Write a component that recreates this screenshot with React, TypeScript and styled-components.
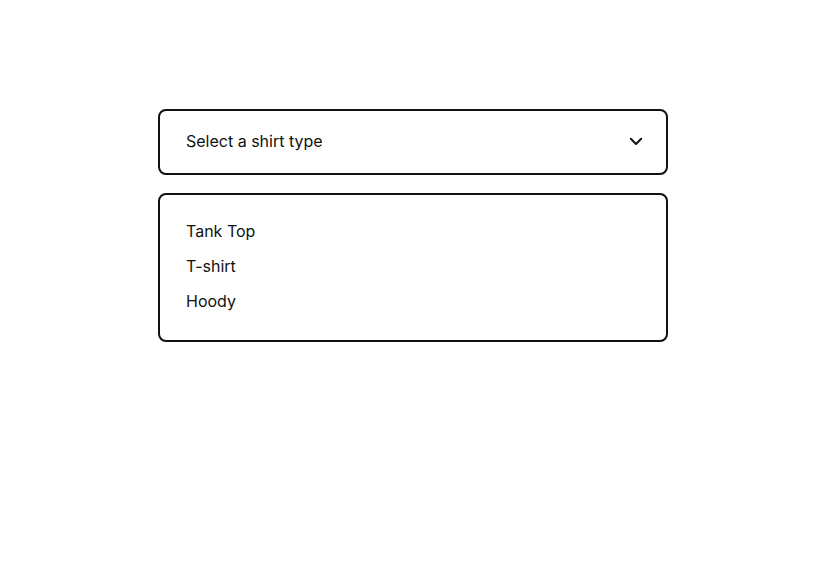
import * as React from 'react'
import styled, { createGlobalStyle } from 'styled-components'

const GlobalStyle = createGlobalStyle`
  body {
    margin: 0;
    background: #ffffff;
    font-family: Inter, "Noto Sans", sans-serif;
    color: #111111;
  }
`

const Page = styled.div`
  display: flex;
  justify-content: center;
  padding-top: 109px;
`

const SelectWrap = styled.div`
  width: 510px;
  display: flex;
  flex-direction: column;
  gap: 18px;
`

const Trigger = styled.button`
  display: flex;
  align-items: center;
  justify-content: space-between;
  height: 66px;
  padding: 0 21px 2px 26px;
  border: 2px solid #111111;
  border-radius: 8px;
  background: #ffffff;
  font-family: inherit;
  font-size: 16px;
  color: #111111;
  cursor: pointer;
`

const Menu = styled.ul`
  list-style: none;
  margin: 0;
  padding: 18px 26px 24px;
  height: 149px;
  box-sizing: border-box;
  border: 2px solid #111111;
  border-radius: 8px;
`

const Option = styled.li`
  height: 35px;
  display: flex;
  align-items: center;
  font-size: 16px;
  color: #111111;
`

const Chevron = () => (
  <svg width="18" height="18" viewBox="0 0 24 24" fill="none" stroke="#111" strokeWidth="2.6" strokeLinecap="round" strokeLinejoin="round">
    <path d="M5 9l7 7 7-7" />
  </svg>
)

const options = ['Tank Top', 'T-shirt', 'Hoody']

export default function App() {
  return (
    <>
      <GlobalStyle />
      <Page>
        <SelectWrap>
          <Trigger>
            <span>Select a shirt type</span>
            <Chevron />
          </Trigger>
          <Menu>
            {options.map(o => <Option key={o}>{o}</Option>)}
          </Menu>
        </SelectWrap>
      </Page>
    </>
  )
}
